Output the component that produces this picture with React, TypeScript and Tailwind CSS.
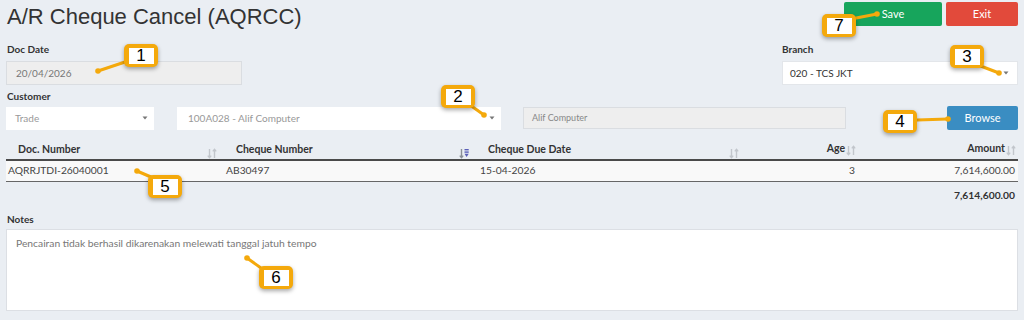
import React from "react";

const SortIcon = ({ active = false }: { active?: boolean }) => (
  <svg width="10" height="11" viewBox="0 0 10 11" className="inline-block">
    <g stroke={active ? "#8a8f96" : "#c2c6cc"} strokeWidth="1.4" fill="none">
      <line x1="2.5" y1="1" x2="2.5" y2="9.5" />
      <polyline points="0.8,7.6 2.5,9.6 4.2,7.6" />
    </g>
    {active ? (
      <g fill="#5a5fb8">
        <rect x="5.5" y="1" width="4.2" height="1.4" />
        <rect x="5.5" y="3.4" width="4.2" height="1.4" />
        <polygon points="5.5,5.8 9.7,5.8 7.6,9" />
      </g>
    ) : (
      <g stroke="#c2c6cc" strokeWidth="1.4" fill="none">
        <line x1="7.5" y1="1.5" x2="7.5" y2="10" />
        <polyline points="5.8,3.4 7.5,1.4 9.2,3.4" />
      </g>
    )}
  </svg>
);

const Caret = () => (
  <svg width="6" height="4" viewBox="0 0 6 4">
    <polygon points="0.5,0.5 5.5,0.5 3,3.5" fill="#777" />
  </svg>
);

const Callout = ({ n, x, y }: { n: string; x: number; y: number }) => (
  <div
    className="absolute w-[34px] h-[23px] rounded-[5px] bg-[#f4a90c] flex items-center justify-center shadow-[0_2px_4px_rgba(0,0,0,0.35)]"
    style={{ left: x, top: y }}
  >
    <div className="w-[25px] h-[16px] bg-white flex items-center justify-center text-[17px] leading-none text-black font-['Liberation_Sans',Arial,sans-serif]">
      {n}
    </div>
  </div>
);

const lines: [number, number, number, number][] = [
  [128, 61, 98, 71],
  [470, 105, 484, 115],
  [978, 65, 999, 73],
  [917, 120, 948, 119],
  [151, 177, 137, 171],
  [261, 268, 247, 258],
  [851, 19, 877, 14],
];

export default function App() {
  return (
    <div className="relative w-[1024px] h-[320px] overflow-hidden bg-[#eaeef3] font-['Lato','Open_Sans',sans-serif] text-[#333]">
      <div className="px-[6px]">
        {/* Header */}
        <div className="flex justify-between items-start h-[40px]">
          <h1 className="pl-[1px] pt-[3px] text-[22px] leading-[28px] font-['Liberation_Sans',Arial,sans-serif] text-[#333]">
            A/R Cheque Cancel (AQRCC)
          </h1>
          <div className="flex gap-[4px] pt-[2px]">
            <button className="w-[98px] h-[24px] rounded-[2px] bg-[#17a55c] text-white text-[11px]">Save</button>
            <button className="w-[72px] h-[24px] rounded-[2px] bg-[#e24a3b] text-white text-[11px]">Exit</button>
          </div>
        </div>

        {/* Doc date / Branch */}
        <div className="flex justify-between">
          <div className="w-[236px]">
            <div className="text-[10px] font-bold leading-[12px] pt-[3px] pl-[1px]">Doc Date</div>
            <div className="mt-[6px] h-[24px] bg-[#eeeeee] border border-[#dadde1] flex items-center pl-[9px] text-[10px] text-[#777]">
              20/04/2026
            </div>
          </div>
          <div className="w-[236px]">
            <div className="text-[10px] font-bold leading-[12px] pt-[3px]">Branch</div>
            <div className="mt-[6px] h-[24px] bg-white border border-[#e3e6ea] flex items-center justify-between pl-[7px] pr-[8px] text-[10px] text-[#333]">
              <span>020 - TCS JKT</span>
              <Caret />
            </div>
          </div>
        </div>

        {/* Customer */}
        <div className="text-[10px] font-bold leading-[12px] mt-[5px] pl-[1px]">Customer</div>
        <div className="flex items-center mt-[4px] h-[24px]">
          <div className="w-[148px] h-[23px] bg-white flex items-center justify-between pl-[9px] pr-[6px] text-[10px] text-[#999]">
            <span>Trade</span>
            <Caret />
          </div>
          <div className="ml-[23px] w-[324px] h-[23px] bg-white flex items-center justify-between pl-[11px] pr-[6px] text-[10px] text-[#999]">
            <span>100A028 - Alif Computer</span>
            <Caret />
          </div>
          <div className="ml-[22px] w-[323px] h-[22px] bg-[#eeeeee] border border-[#dadde1] flex items-center pl-[8px] text-[9px] text-[#888]">
            Alif Computer
          </div>
          <button className="ml-auto w-[71px] h-[24px] rounded-[2px] bg-[#3a8dc2] text-white text-[11px]">Browse</button>
        </div>

        {/* Table */}
        <table className="mt-[10px] w-[1012px] table-fixed border-collapse text-[10.3px]">
          <colgroup>
            <col className="w-[220px]" />
            <col className="w-[252px]" />
            <col className="w-[270px]" />
            <col className="w-[110px]" />
            <col className="w-[160px]" />
          </colgroup>
          <thead>
            <tr className="h-[20px] border-b-2 border-[#4a4a4a] text-[10.5px] font-bold text-[#333]">
              <th className="relative text-left pl-[12px]">
                Doc. Number
                <span className="absolute right-[9px] top-[5px]"><SortIcon /></span>
              </th>
              <th className="relative text-left pl-[10px]">
                Cheque Number
                <span className="absolute right-[9px] top-[5px]"><SortIcon active /></span>
              </th>
              <th className="relative text-left pl-[10px]">
                Cheque Due Date
                <span className="absolute right-[9px] top-[5px]"><SortIcon /></span>
              </th>
              <th className="text-right pr-[2px]">
                Age<span className="ml-[1px] align-[-1px]"><SortIcon /></span>
              </th>
              <th className="text-right pr-[2px]">
                Amount<span className="ml-[1px] align-[-1px]"><SortIcon /></span>
              </th>
            </tr>
          </thead>
          <tbody>
            <tr className="h-[21px] bg-[#f9f9f9] border-b border-[#666] text-[#444]">
              <td className="pl-[2px]">AQRRJTDI-26040001</td>
              <td className="pl-[0px]">AB30497</td>
              <td className="pl-[2px]">15-04-2026</td>
              <td className="text-right pr-[3px]">3</td>
              <td className="text-right pr-[3px]">7,614,600.00</td>
            </tr>
            <tr className="h-[28px] font-bold text-[#333]">
              <td />
              <td />
              <td />
              <td />
              <td className="text-right pr-[3px]">7,614,600.00</td>
            </tr>
          </tbody>
        </table>

        {/* Notes */}
        <div className="text-[10px] font-bold leading-[12px] mt-[4px] pl-[1px]">Notes</div>
        <div className="mt-[4px] h-[82px] bg-white border border-[#dcdfe4] pl-[9px] pt-[6px] text-[10.3px] text-[#777]">
          Pencairan tidak berhasil dikarenakan melewati tanggal jatuh tempo
        </div>
      </div>

      {/* Callout overlays */}
      <svg className="absolute left-0 top-0 pointer-events-none" width="1024" height="320">
        {lines.map(([x1, y1, x2, y2], i) => (
          <g key={i}>
            <line x1={x1} y1={y1} x2={x2} y2={y2} stroke="#f4a90c" strokeWidth="3" strokeLinecap="round" />
            <circle cx={x2} cy={y2} r="2.8" fill="#f4a90c" />
          </g>
        ))}
      </svg>
      <Callout n="1" x={124} y={44} />
      <Callout n="2" x={441} y={85} />
      <Callout n="3" x={950} y={45} />
      <Callout n="4" x={883} y={110} />
      <Callout n="5" x={148} y={175} />
      <Callout n="6" x={259} y={266} />
      <Callout n="7" x={822} y={14} />
    </div>
  );
}
